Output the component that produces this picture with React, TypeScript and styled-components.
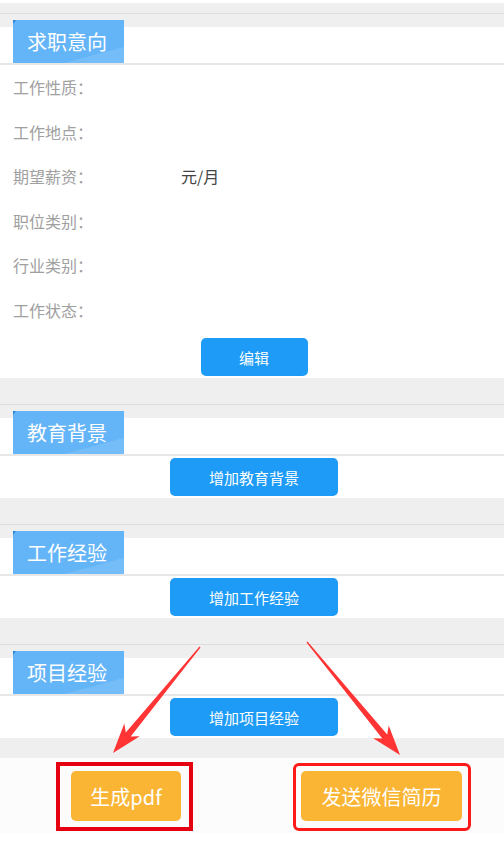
import styled, { createGlobalStyle } from "styled-components";

const GlobalStyle = createGlobalStyle`
  html, body {
    margin: 0;
    padding: 0;
    background: #ffffff;
    font-family: "Noto Sans CJK SC", "Noto Sans", sans-serif;
  }
`;

const Page = styled.div`
  position: relative;
  width: 504px;
  padding-top: 3px;
  background: #ffffff;
`;

const Gap = styled.div<{ $lead: number }>`
  height: ${(p) => p.$lead}px;
  background: #efefef;
  border-bottom: 1px solid #dcdcdc;
`;

const HeadRow = styled.div`
  height: 49px;
  background: linear-gradient(#efefef 0, #efefef 13px, #ffffff 13px);
  border-bottom: 2px solid #e7e7e7;
  box-sizing: content-box;
  display: flex;
  align-items: flex-start;
`;

const Tab = styled.div`
  position: relative;
  margin: 6px 0 0 13px;
  width: 111px;
  height: 43px;
  box-sizing: border-box;
  padding-left: 14px;
  display: flex;
  align-items: center;
  background: linear-gradient(165deg, #64b4f8 0%, #64b4f8 78%, #74bdf9 78%, #74bdf9 100%);
  color: #ffffff;
  font-size: 20px;

  &::before {
    content: "";
    position: absolute;
    left: 0;
    top: 0;
    border-top: 4px solid #2a86d6;
    border-right: 3px solid transparent;
  }
`;

const Body = styled.div`
  background: #ffffff;
  display: flex;
  flex-direction: column;
`;

const InfoRow = styled.div`
  height: 44.5px;
  display: flex;
  align-items: center;
  padding-left: 13px;
  font-size: 16px;
`;

const Label = styled.span`
  width: 168px;
  color: #a0a0a0;
`;

const Value = styled.span`
  color: #444444;
`;

const BlueButton = styled.button<{ $w: number; $top: number }>`
  align-self: center;
  width: ${(p) => p.$w}px;
  height: 38px;
  margin: ${(p) => p.$top}px 0 2px 4px;
  border: none;
  border-radius: 5px;
  background: #1d9bf6;
  color: #ffffff;
  font-family: inherit;
  font-size: 15px;
  padding: 0;
`;

const BottomGap = styled.div`
  height: 20px;
  background: #efefef;
`;

const ActionBar = styled.div`
  height: 75px;
  box-sizing: border-box;
  background: #fcfcfc;
  display: flex;
  align-items: flex-start;
  padding: 4px 0 0 56px;
  gap: 100px;
`;

const Mark = styled.div<{ $thick: number; $color: string; $radius: number; $pad: string; $shift: number }>`
  border: ${(p) => p.$thick}px solid ${(p) => p.$color};
  border-radius: ${(p) => p.$radius}px;
  padding: ${(p) => p.$pad};
  margin-top: ${(p) => p.$shift}px;
  display: flex;
`;

const OrangeButton = styled.button<{ $w: number }>`
  width: ${(p) => p.$w}px;
  height: 50px;
  border: none;
  border-radius: 5px;
  background: #fbb534;
  color: #ffffff;
  font-family: inherit;
  font-size: 20px;
  padding: 0;
`;

const Overlay = styled.svg`
  position: absolute;
  left: 0;
  top: 0;
  pointer-events: none;
`;

function arrowPoints(x1: number, y1: number, x2: number, y2: number) {
  const len = Math.hypot(x2 - x1, y2 - y1);
  const dx = (x2 - x1) / len;
  const dy = (y2 - y1) / len;
  const nx = -dy;
  const ny = dx;
  const neck = { x: x2 - dx * 24, y: y2 - dy * 24 };
  const wing = { x: x2 - dx * 30, y: y2 - dy * 30 };
  const pts = [
    [x1 + nx * 0.6, y1 + ny * 0.6],
    [neck.x + nx * 3.2, neck.y + ny * 3.2],
    [wing.x + nx * 10, wing.y + ny * 10],
    [x2, y2],
    [wing.x - nx * 10, wing.y - ny * 10],
    [neck.x - nx * 3.2, neck.y - ny * 3.2],
    [x1 - nx * 0.6, y1 - ny * 0.6],
  ];
  return pts.map(([a, b]) => `${a.toFixed(1)},${b.toFixed(1)}`).join(" ");
}

const intention = [
  { label: "工作性质：", value: "" },
  { label: "工作地点：", value: "" },
  { label: "期望薪资：", value: "元/月" },
  { label: "职位类别：", value: "" },
  { label: "行业类别：", value: "" },
  { label: "工作状态：", value: "" },
];

const sections = [
  { title: "教育背景", action: "增加教育背景" },
  { title: "工作经验", action: "增加工作经验" },
  { title: "项目经验", action: "增加项目经验" },
];

export default function App() {
  return (
    <Page>
      <GlobalStyle />
      <Gap $lead={10} />
      <HeadRow>
        <Tab>求职意向</Tab>
      </HeadRow>
      <Body>
        {intention.map((row) => (
          <InfoRow key={row.label}>
            <Label>{row.label}</Label>
            <Value>{row.value}</Value>
          </InfoRow>
        ))}
        <BlueButton $w={107} $top={6}>编辑</BlueButton>
      </Body>

      {sections.map((s) => (
        <div key={s.title}>
          <Gap $lead={26} />
          <HeadRow>
            <Tab>{s.title}</Tab>
          </HeadRow>
          <Body>
            <BlueButton $w={168} $top={2}>{s.action}</BlueButton>
          </Body>
        </div>
      ))}

      <BottomGap />
      <ActionBar>
        <Mark $thick={4} $color="#e50012" $radius={0} $pad="5px 8px 6px 11px" $shift={0}>
          <OrangeButton $w={110}>生成pdf</OrangeButton>
        </Mark>
        <Mark $thick={3} $color="#ff1a1a" $radius={6} $pad="5px 6px 7px 5px" $shift={1}>
          <OrangeButton $w={161}>发送微信简历</OrangeButton>
        </Mark>
      </ActionBar>

      <Overlay width="504" height="861" viewBox="0 0 504 861">
        <polygon points={arrowPoints(200, 647, 113, 753)} fill="#ff3434" />
        <polygon points={arrowPoints(307, 642, 400, 755)} fill="#ff3434" />
      </Overlay>
    </Page>
  );
}
